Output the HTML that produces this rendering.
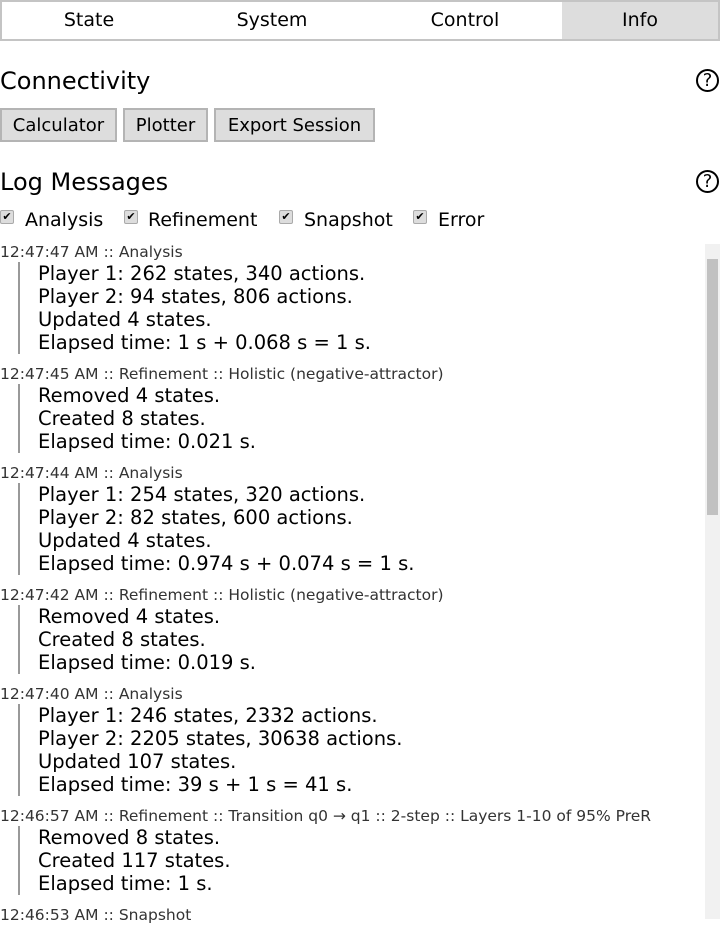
<!DOCTYPE html>
<html><head><meta charset="utf-8"><style>
*{box-sizing:border-box;margin:0;padding:0}
body{width:720px;height:919px;overflow:hidden;background:#fff;font-family:"DejaVu Sans","Liberation Sans",sans-serif;color:#000;position:relative}
.tabs{position:absolute;left:0;top:0;width:720px;height:41px;border:2px solid #c4c4c4;display:flex}
.tabs div{text-align:center;font-size:19px;line-height:37px}
.tabs .on{background:#ddd}
h2{position:absolute;left:0;font-weight:normal;font-size:24px;line-height:30px}
.help{position:absolute;left:696px;width:23px;height:23px;border:2px solid #000;border-radius:50%;font-size:18px;line-height:19px;text-align:center}
.btn{position:absolute;top:108px;height:34px;background:#ddd;border:2px solid #b4b4b4;font-size:18px;line-height:31px;text-align:center;white-space:nowrap}
.cb{position:absolute;top:209px;font-size:19px;line-height:22px;white-space:nowrap}
.box{position:absolute;top:210px;width:14px;height:14px;background:#ddd;border:1px solid #aaa;border-radius:2px;font-size:11px;line-height:12px;text-align:center}
.log{position:absolute;left:0;top:242px;width:705px}
.h{font-size:15.5px;line-height:20px;color:#333;white-space:nowrap}
.b{margin-left:18px;border-left:2px solid #999;padding-left:18px;font-size:19.5px;line-height:23px;margin-bottom:10px;white-space:nowrap}
.sb{position:absolute;left:705px;top:244px;width:15px;height:675px;background:#f1f1f1}
.th{position:absolute;left:707px;top:259px;width:11px;height:256px;background:#c1c1c1}
</style></head><body>
<div class="tabs"><div style="width:174px">State</div><div style="width:192px">System</div><div style="width:194px">Control</div><div class="on" style="width:156px">Info</div></div>
<h2 style="top:66px">Connectivity</h2><div class="help" style="top:69px">?</div>
<div class="btn" style="left:0;width:117px">Calculator</div>
<div class="btn" style="left:123px;width:85px">Plotter</div>
<div class="btn" style="left:214px;width:161px">Export Session</div>
<h2 style="top:167px">Log Messages</h2><div class="help" style="top:170px">?</div>
<div class="box" style="left:0">✔</div><div class="cb" style="left:25px">Analysis</div>
<div class="box" style="left:124px">✔</div><div class="cb" style="left:148px">Refinement</div>
<div class="box" style="left:279px">✔</div><div class="cb" style="left:304px">Snapshot</div>
<div class="box" style="left:413px">✔</div><div class="cb" style="left:438px">Error</div>
<div class="log">
<div class="h">12:47:47 AM :: Analysis</div>
<div class="b">Player 1: 262 states, 340 actions.<br>Player 2: 94 states, 806 actions.<br>Updated 4 states.<br>Elapsed time: 1 s + 0.068 s = 1 s.</div>
<div class="h">12:47:45 AM :: Refinement :: Holistic (negative-attractor)</div>
<div class="b">Removed 4 states.<br>Created 8 states.<br>Elapsed time: 0.021 s.</div>
<div class="h">12:47:44 AM :: Analysis</div>
<div class="b">Player 1: 254 states, 320 actions.<br>Player 2: 82 states, 600 actions.<br>Updated 4 states.<br>Elapsed time: 0.974 s + 0.074 s = 1 s.</div>
<div class="h">12:47:42 AM :: Refinement :: Holistic (negative-attractor)</div>
<div class="b">Removed 4 states.<br>Created 8 states.<br>Elapsed time: 0.019 s.</div>
<div class="h">12:47:40 AM :: Analysis</div>
<div class="b">Player 1: 246 states, 2332 actions.<br>Player 2: 2205 states, 30638 actions.<br>Updated 107 states.<br>Elapsed time: 39 s + 1 s = 41 s.</div>
<div class="h">12:46:57 AM :: Refinement :: Transition q0 → q1 :: 2-step :: Layers 1-10 of 95% PreR</div>
<div class="b">Removed 8 states.<br>Created 117 states.<br>Elapsed time: 1 s.</div>
<div class="h">12:46:53 AM :: Snapshot</div>
</div>
<div class="sb"></div><div class="th"></div>
</body></html>
